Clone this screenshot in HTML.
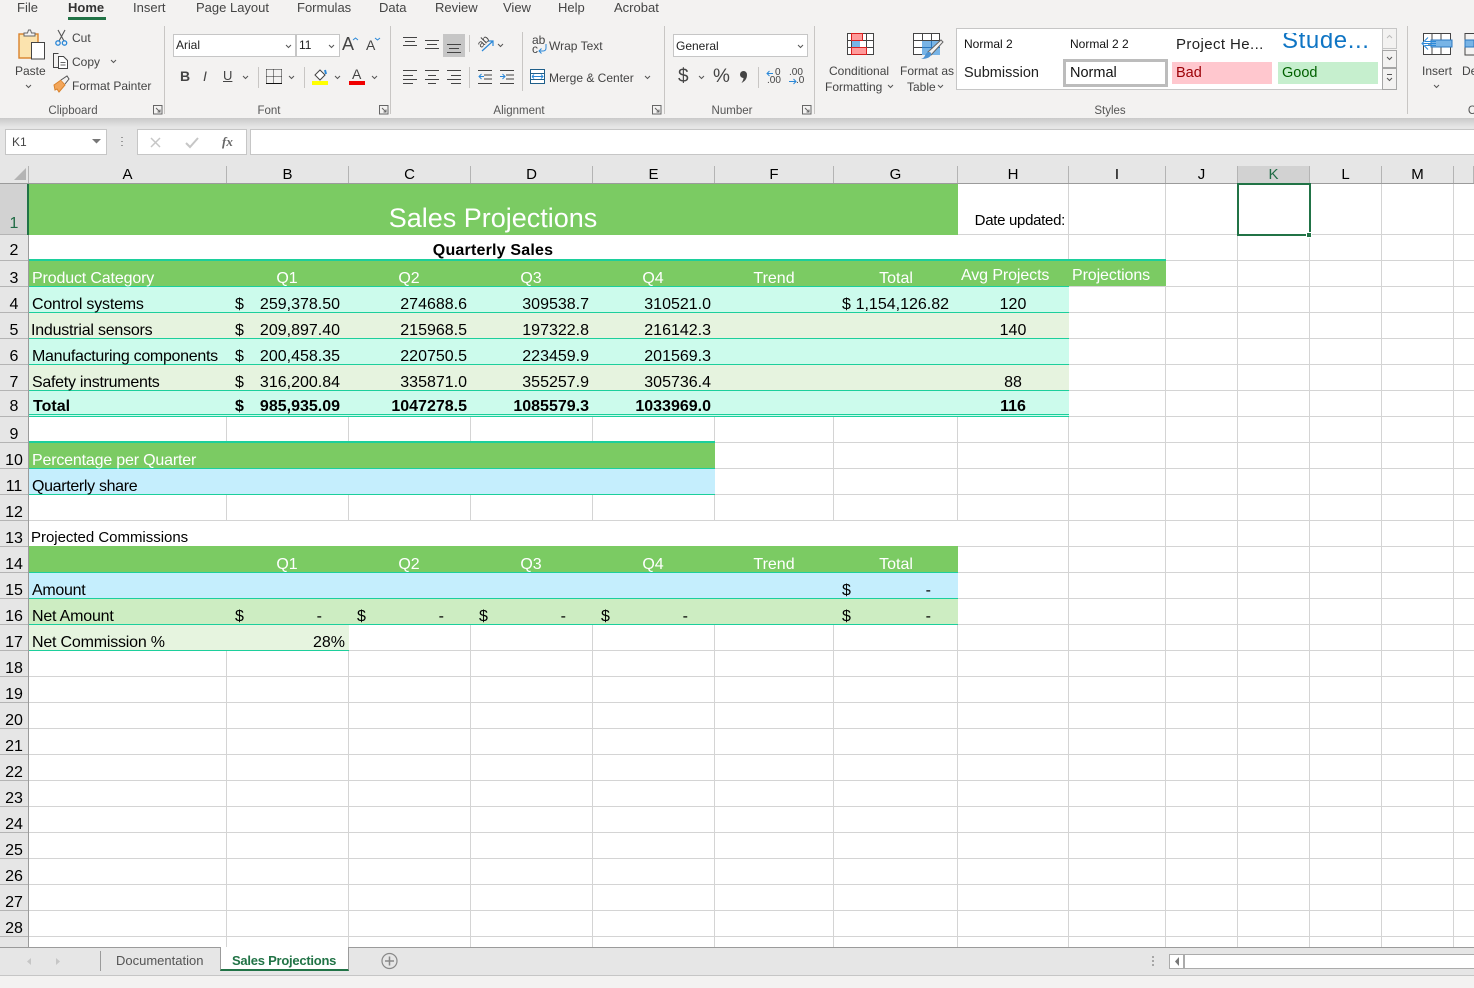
<!DOCTYPE html>
<html><head><meta charset="utf-8"><title>Sales Projections</title>
<style>
html,body{margin:0;padding:0;background:#fff}
#p{position:relative;width:1474px;height:988px;overflow:hidden;background:#fff;font-family:"Liberation Sans",sans-serif;color:#000}
#p div{position:absolute}
.t{white-space:nowrap;font-size:16px;line-height:20px;height:20px}
.r{white-space:nowrap;font-size:16px;line-height:20px;height:20px;text-align:right}
.c{white-space:nowrap;font-size:16px;line-height:20px;height:20px;text-align:center;transform:translateX(-50%)}
.w{color:#fff}
.b{font-weight:bold}
.m{white-space:nowrap;font-size:13px;line-height:16px;color:#444;top:0}
.s{white-space:nowrap;font-size:12px;line-height:16px;color:#444}
.g{white-space:nowrap;font-size:11.5px;line-height:14px;color:#555;top:104px;transform:translateX(-50%)}
.v{width:1px;background:#d4d4d4;top:184px;height:763px}
.ch{top:166px;height:18px;font-size:15px;line-height:18px;text-align:center;border-right:1px solid #b4b4b4;box-sizing:border-box}
.rh{left:0;width:28px;text-align:center;font-size:16px;line-height:20px;height:20px}
.tl{height:1px;background:#1ccf9c}
</style></head><body><div id="p">

<!-- ribbon -->
<div style="left:0;top:0;width:1474px;height:118px;background:#f3f2f1"></div>
<div style="left:0;top:118px;width:1474px;height:48px;background:#e6e6e6"></div>
<div style="left:0;top:118px;width:1474px;height:9px;background:linear-gradient(#c9c9c9,#e6e6e6)"></div>

<div class="m" style="left:17px">File</div>
<div class="m" style="left:68px;font-weight:bold;color:#333">Home</div>
<div style="left:68px;top:17px;width:38px;height:3px;background:#217346"></div>
<div class="m" style="left:133px">Insert</div>
<div class="m" style="left:196px">Page Layout</div>
<div class="m" style="left:297px">Formulas</div>
<div class="m" style="left:379px">Data</div>
<div class="m" style="left:435px">Review</div>
<div class="m" style="left:503px">View</div>
<div class="m" style="left:558px">Help</div>
<div class="m" style="left:614px">Acrobat</div>

<!-- group separators -->
<div style="left:164px;top:26px;width:1px;height:88px;background:#c8c6c4"></div>
<div style="left:390px;top:26px;width:1px;height:88px;background:#c8c6c4"></div>
<div style="left:664px;top:26px;width:1px;height:88px;background:#c8c6c4"></div>
<div style="left:814px;top:26px;width:1px;height:88px;background:#c8c6c4"></div>
<div style="left:1407px;top:26px;width:1px;height:88px;background:#c8c6c4"></div>

<!-- combos -->
<div style="left:173px;top:34px;width:121px;height:21px;background:#fff;border:1px solid #c6c6c6"></div>
<div style="left:296px;top:34px;width:42px;height:21px;background:#fff;border:1px solid #c6c6c6"></div>
<div style="left:443px;top:34px;width:22px;height:23px;background:#c6c6c6"></div>
<div style="left:673px;top:34px;width:133px;height:21px;background:#fff;border:1px solid #c6c6c6"></div>

<!-- ribbon icons -->
<svg style="position:absolute;left:0;top:0" width="1474" height="166" viewBox="0 0 1474 166" fill="none">
<!-- paste -->
<rect x="19" y="34" width="19" height="24" fill="#fbe3ae" stroke="#d9822b" stroke-width="1.4"/>
<path d="M24 36v-3h3.500l1-3h2l1 3H35v3z" fill="#f3f2f1" stroke="#666"/>
<rect x="31.500" y="42.500" width="13" height="16.500" fill="#fff" stroke="#444"/>
<!-- cut -->
<path d="M58 30l6 11M65 30l-6 11" stroke="#555" stroke-width="1.100"/>
<circle cx="58" cy="43" r="2.200" stroke="#2b88d8" stroke-width="1.300"/><circle cx="64.500" cy="43" r="2.200" stroke="#2b88d8" stroke-width="1.300"/>
<!-- copy -->
<path d="M60 67.500h-6.500v-14h5" stroke="#444"/>
<path d="M58.500 56.500h5l4 4v8h-9z" fill="#fff" stroke="#444"/>
<path d="M60.500 62.500h5M60.500 65h5" stroke="#666"/>
<path d="M111 60l2.500 2.500 2.500-2.500" stroke="#555"/>
<!-- painter -->
<path d="M54 85l7-5 4 5-6 7-2-3-2 1z" fill="#f2a65a" stroke="#d9822b"/>
<path d="M61 80l6-4 2 3-4 5" fill="#f3f2f1" stroke="#555"/>
<!-- chevrons -->
<g stroke="#555" stroke-width="1" fill="none">
<path d="M26 85l2.500 2.500L31 85"/>
<path d="M286 45l2.500 2.500L291 45"/><path d="M329 45l2.500 2.500L334 45"/>
<path d="M243 76l2.500 2.500 2.500-2.500"/><path d="M289 76l2.500 2.500 2.500-2.500"/><path d="M335 76l2.500 2.500 2.500-2.500"/><path d="M372 76l2.500 2.500 2.500-2.500"/>
<path d="M498 44l2.500 2.500 2.500-2.500"/><path d="M645 76l2.500 2.500 2.500-2.500"/><path d="M699 76l2.500 2.500 2.500-2.500"/>
<path d="M798 45l2.500 2.500 2.500-2.500"/><path d="M888 85l2.500 2.500 2.500-2.500"/><path d="M938 85l2.500 2.500 2.500-2.500"/>
<path d="M1434 85l2.500 2.500 2.500-2.500"/>
<path d="M1387 57l2.500 2.500 2.500-2.500"/><path d="M1387 78l2.500 2.500 2.500-2.500"/><path d="M1387 74.500h5"/>
</g>
<path d="M1387 38l2.500-2.500 2.500 2.500" stroke="#bbb"/>
<!-- launchers -->
<g stroke="#666">
<path d="M153.500 105.500h8.500v8.500h-8.500zM156 108l4 4M160 109.500v2.500h-2.500"/>
<path d="M379.500 105.500h8.500v8.500h-8.500zM382 108l4 4M386 109.500v2.500h-2.500"/>
<path d="M652.500 105.500h8.500v8.500h-8.500zM655 108l4 4M659 109.500v2.500h-2.500"/>
<path d="M802.500 105.500h8.500v8.500h-8.500zM805 108l4 4M809 109.500v2.500h-2.500"/>
</g>
<!-- small separators -->
<path d="M258.500 67v21M304.500 67v21M469.500 35v17M469.500 67v21M522.500 32v59M758.500 67v21" stroke="#c8c6c4"/>
<!-- borders icon -->
<path d="M266.500 69.500h15M266.500 76.500h15M266.500 69.500v14M273.500 69.500v14M281.500 69.500v14" stroke="#222" stroke-dasharray="1 1"/>
<path d="M266 83.500h16" stroke="#111"/>
<!-- fill -->
<path d="M315 75l5-5 5 5-5 5z" fill="#fff" stroke="#444"/><path d="M325 70l1 4" stroke="#2b88d8" stroke-width="2"/>
<rect x="312" y="81" width="16" height="4" fill="#ffff00"/>
<rect x="349" y="81" width="16" height="4" fill="#f00000"/>
<!-- up/down arrows on A -->
<path d="M353 40l2.500-2 2.500 2" stroke="#2b88d8"/><path d="M375 38l2.500 2 2.500-2" stroke="#2b88d8"/>
<!-- align -->
<g stroke="#444">
<path d="M403 37.500h14M405 41.500h10M403 45.500h14"/>
<path d="M425 40.500h14M427 44.500h10M425 48.500h14"/>
<path d="M447 44.500h14M449 48.500h10M447 52.500h14"/>
<path d="M403 70.500h14M403 75.500h10M403 79.500h14M403 83.500h10"/>
<path d="M425 70.500h14M428 75.500h8M425 79.500h14M428 83.500h8"/>
<path d="M447 70.500h14M451 75.500h10M447 79.500h14M451 83.500h10"/>
<path d="M478 70.500h14M484 75h8M484 79h8M478 83.500h14"/>
<path d="M500 70.500h14M506 75h8M506 79h8M500 83.500h14"/>
</g>
<path d="M484 76.500h-5m2.500-2.500l-2.500 2.500 2.500 2.500" stroke="#2b88d8"/>
<path d="M500 76.500h5m-2.500-2.500l2.500 2.500-2.500 2.500" stroke="#2b88d8"/>
<!-- orientation -->
<path d="M482 51l11-10m-5 0h5v5" stroke="#2b88d8" stroke-width="1.200"/>
<text x="477" y="46" font-size="11" fill="#444" transform="rotate(-45 482 42)" font-family="Liberation Sans">ab</text>
<!-- wrap -->
<text x="532" y="44" font-size="12" fill="#444" font-family="Liberation Sans">ab</text>
<text x="532" y="53" font-size="12" fill="#444" font-family="Liberation Sans">c</text>
<path d="M546 44v4q0 3-3 3h-4m2.500-2.500l-2.500 2.500 2.500 2.500" stroke="#2b88d8"/>
<!-- merge -->
<rect x="530.500" y="69.500" width="14" height="14" stroke="#1f5f8a" fill="#fff"/>
<path d="M530 73.500h15M530 79.500h15" stroke="#1f5f8a"/>
<path d="M532 76.500h11m-2-2l2 2-2 2m-9-2l2-2m-2 2l2 2" stroke="#2b88d8"/>
<!-- comma -->
<path d="M743.500 71a3.500 3.500 0 0 1 3.500 4c0 4-2.500 6.500-5.500 8 1.200-2 2-3.500 2-5a3.500 3.500 0 0 1 0-7z" fill="#444"/>
<!-- decimals -->
<path d="M773 73.500h-6m2.500-2.500l-2.500 2.500 2.500 2.500" stroke="#2b88d8"/>
<path d="M789 81.500h7m-2.500-2.500l2.500 2.500-2.500 2.500" stroke="#2b88d8"/>
<!-- conditional -->
<g stroke="#444"><rect x="847.500" y="33.500" width="26" height="21" fill="#fff"/><path d="M847 40.500h27M847 47.500h27M851.500 33v22M859.500 33v22M866.500 33v22"/></g>
<rect x="851.500" y="33.500" width="11" height="7" fill="#ff9a9a" stroke="#d92020"/>
<rect x="851.500" y="47.500" width="15" height="7" fill="#ff9a9a" stroke="#d92020"/>
<rect x="852" y="41" width="8" height="6" fill="#78b4e6"/>
<!-- format table -->
<g stroke="#444"><rect x="913.500" y="33.500" width="26" height="21" fill="#fff"/><path d="M913 40.500h27M913 47.500h27M922.500 33v22M931.500 33v22"/></g>
<rect x="922" y="41" width="18" height="14" fill="#78b4e6"/>
<path d="M922 47.500h18M931.500 41v14" stroke="#2b78c0"/>
<path d="M928 52l13-12 2 2-12 13z" fill="#f3f2f1" stroke="#666"/>
<path d="M921 59c3 0 7-.5 9-2.500 2-2 1.500-4-.5-4.500-2 0-3.500 1-4.500 3.500-.8 1.700-2 3-4 3.500z" fill="#4d93d2"/>
<!-- insert -->
<g stroke="#444"><rect x="1423.500" y="33.500" width="27" height="21" fill="#fff"/><path d="M1423 44h28M1432 33v22M1441 33v22"/></g>
<rect x="1431" y="40" width="21" height="7" fill="#78b4e6" stroke="#2b78c0"/>
<path d="M1436 43.500h-13m5-6l-6 6 6 6m-3-8h11m-11 4h11" stroke="#2b88d8" fill="#fff"/>
<g stroke="#444"><path d="M1474 33.500h-9v7M1465 47v8h9"/></g>
<rect x="1465" y="40" width="9" height="7" fill="#78b4e6" stroke="#2b78c0"/>
</svg>

<div class="s" style="left:72px;top:30px">Cut</div>
<div class="s" style="left:72px;top:54px">Copy</div>
<div class="s" style="left:72px;top:78px">Format Painter</div>
<div class="s" style="left:15px;top:63px">Paste</div>
<div class="s" style="left:176px;top:37px;color:#222">Arial</div>
<div class="s" style="left:299px;top:37px;color:#222">11</div>
<div class="s" style="left:342px;top:34px;font-size:18px;line-height:20px">A</div>
<div class="s" style="left:366px;top:37px;font-size:14px">A</div>
<div class="s" style="left:180px;top:68px;font-weight:bold;font-size:14px">B</div>
<div class="s" style="left:203px;top:68px;font-style:italic;font-size:14px">I</div>
<div class="s" style="left:223px;top:68px;text-decoration:underline;font-size:13px">U</div>
<div class="s" style="left:352px;top:66px;font-size:14px">A</div>
<div class="s" style="left:549px;top:38px">Wrap Text</div>
<div class="s" style="left:549px;top:70px">Merge &amp; Center</div>
<div class="s" style="left:676px;top:38px;color:#222">General</div>
<div class="s" style="left:678px;top:67px;font-size:19px;line-height:20px">$</div>
<div class="s" style="left:713px;top:67px;font-size:19px;line-height:20px">%</div>
<div class="s" style="left:775px;top:68px;font-size:10px;line-height:10px">0</div>
<div class="s" style="left:767px;top:76px;font-size:10px;line-height:10px">.00</div>
<div class="s" style="left:789px;top:68px;font-size:10px;line-height:10px">.00</div>
<div class="s" style="left:796px;top:76px;font-size:10px;line-height:10px">.0</div>
<div class="s" style="left:829px;top:63px">Conditional</div>
<div class="s" style="left:825px;top:79px">Formatting</div>
<div class="s" style="left:900px;top:63px">Format as</div>
<div class="s" style="left:907px;top:79px">Table</div>
<div class="s" style="left:1422px;top:63px">Insert</div>
<div class="s" style="left:1462px;top:63px">De</div>

<div class="g" style="left:73px">Clipboard</div>
<div class="g" style="left:269px">Font</div>
<div class="g" style="left:519px">Alignment</div>
<div class="g" style="left:732px">Number</div>
<div class="g" style="left:1110px">Styles</div>
<div class="g" style="left:1472px">C</div>

<!-- styles gallery -->
<div style="left:956px;top:28px;width:425px;height:60px;background:#fff;border:1px solid #c6c6c6"></div>
<div style="left:1382px;top:28px;width:13px;height:19px;border:1px solid #c6c6c6"></div>
<div style="left:1382px;top:50px;width:13px;height:16px;border:1px solid #a6a6a6"></div>
<div style="left:1382px;top:68px;width:13px;height:20px;border:1px solid #a6a6a6"></div>
<div class="s" style="left:964px;top:36px;color:#111">Normal 2</div>
<div class="s" style="left:1070px;top:36px;color:#111">Normal 2 2</div>
<div class="s" style="left:1176px;top:36px;font-size:15px;line-height:18px;color:#222;letter-spacing:.4px">Project He...</div>
<div style="left:1282px;top:33px;width:90px;height:22px;overflow:hidden"><div class="s" style="left:0;top:-6px;font-size:24px;line-height:28px;color:#0f75c4;letter-spacing:.6px">Stude...</div></div>
<div class="s" style="left:964px;top:65px;font-size:14.500px;color:#222">Submission</div>
<div style="left:1063px;top:59px;width:99px;height:22px;background:#fff;border:3px solid #bcbcbc"></div>
<div class="s" style="left:1070px;top:65px;font-size:14.500px;color:#111">Normal</div>
<div style="left:1172px;top:62px;width:100px;height:22px;background:#ffc7ce"></div>
<div class="s" style="left:1176px;top:65px;font-size:14.500px;color:#9c0006">Bad</div>
<div style="left:1278px;top:62px;width:100px;height:22px;background:#c6efce"></div>
<div class="s" style="left:1282px;top:65px;font-size:14.500px;color:#006100">Good</div>

<!-- formula bar -->
<div style="left:5px;top:129px;width:100px;height:24px;background:#fff;border:1px solid #c6c6c6"></div>
<div class="s" style="left:12px;top:134px;color:#444">K1</div>
<svg style="position:absolute;left:0;top:120px" width="260" height="45" fill="none">
<path d="M92 19h9l-4.500 4.500z" fill="#777"/>
<path d="M122 17v1M122 21v1M122 25v1" stroke="#999" stroke-width="2"/>
</svg>
<div style="left:137px;top:129px;width:108px;height:24px;background:#fff;border:1px solid #c6c6c6"></div>
<svg style="position:absolute;left:137px;top:129px" width="110" height="26" fill="none">
<path d="M14 9l9 9M23 9l-9 9" stroke="#c6c6c6" stroke-width="1.500"/>
<path d="M49 14l4 4 8-9" stroke="#c6c6c6" stroke-width="2"/>
</svg>
<div class="s" style="left:222px;top:134px;font-family:'Liberation Serif',serif;font-style:italic;font-weight:bold;color:#666;font-size:13px">fx</div>
<div style="left:250px;top:129px;width:1224px;height:24px;background:#fff;border:1px solid #c6c6c6;border-right:0"></div>

<!-- column headers -->
<div style="left:0;top:166px;width:1474px;height:18px;background:#e6e6e6"></div>
<svg style="position:absolute;left:0;top:166px" width="30" height="18"><path d="M14 14L26 2V14z" fill="#b4b4b4"/></svg>
<div style="left:28px;top:166px;width:1px;height:18px;background:#b4b4b4"></div>
<div class="ch" style="left:29px;width:198px">A</div>
<div class="ch" style="left:227px;width:122px">B</div>
<div class="ch" style="left:349px;width:122px">C</div>
<div class="ch" style="left:471px;width:122px">D</div>
<div class="ch" style="left:593px;width:122px">E</div>
<div class="ch" style="left:715px;width:119px">F</div>
<div class="ch" style="left:834px;width:124px">G</div>
<div class="ch" style="left:958px;width:111px">H</div>
<div class="ch" style="left:1069px;width:97px">I</div>
<div class="ch" style="left:1166px;width:72px">J</div>
<div class="ch" style="left:1238px;width:72px;background:#d2d2d2;color:#1f6b45">K</div>
<div class="ch" style="left:1310px;width:72px">L</div>
<div class="ch" style="left:1382px;width:72px">M</div>
<div class="ch" style="left:1454px;width:20px"></div>
<div style="left:0;top:183px;width:1474px;height:1px;background:#9b9b9b"></div>

<!-- row headers -->
<div style="left:0;top:184px;width:28px;height:763px;background:#e6e6e6"></div>
<div style="left:0;top:184px;width:28px;height:51px;background:#d2d2d2"></div>
<div style="left:0;top:209px;width:28px;height:738px;background:repeating-linear-gradient(to bottom,transparent 0 25px,#b4b4b4 25px 26px)"></div>
<div style="left:28px;top:184px;width:1px;height:763px;background:#9b9b9b"></div>
<div style="left:27px;top:184px;width:2px;height:51px;background:#217346"></div>

<!-- grid -->
<div style="left:29px;top:209px;width:1445px;height:738px;background:repeating-linear-gradient(to bottom,transparent 0 25px,#d4d4d4 25px 26px)"></div>
<div class="v" style="left:226px"></div><div class="v" style="left:348px"></div><div class="v" style="left:470px"></div><div class="v" style="left:592px"></div><div class="v" style="left:714px"></div><div class="v" style="left:833px"></div><div class="v" style="left:957px"></div><div class="v" style="left:1068px"></div><div class="v" style="left:1165px"></div><div class="v" style="left:1237px"></div><div class="v" style="left:1309px"></div><div class="v" style="left:1381px"></div><div class="v" style="left:1453px"></div>

<!-- fills -->
<div style="left:29px;top:184px;width:929px;height:51px;background:#7bcb63"></div>
<div style="left:29px;top:235px;width:929px;height:24px;background:#fff"></div>
<div class="tl" style="left:29px;top:259px;width:1137px;height:2px"></div>
<div style="left:29px;top:261px;width:1137px;height:25px;background:#7bcb63"></div>
<div class="tl" style="left:29px;top:286px;width:1040px"></div>
<div style="left:29px;top:287px;width:1040px;height:25px;background:#ccfbec"></div>
<div class="tl" style="left:29px;top:312px;width:1040px"></div>
<div style="left:29px;top:313px;width:1040px;height:25px;background:#e6f3df"></div>
<div class="tl" style="left:29px;top:338px;width:1040px"></div>
<div style="left:29px;top:339px;width:1040px;height:25px;background:#ccfbec"></div>
<div class="tl" style="left:29px;top:364px;width:1040px"></div>
<div style="left:29px;top:365px;width:1040px;height:25px;background:#e6f3df"></div>
<div class="tl" style="left:29px;top:390px;width:1040px"></div>
<div style="left:29px;top:391px;width:1040px;height:23px;background:#ccfbec"></div>
<div class="tl" style="left:29px;top:414px;width:1040px"></div>
<div style="left:29px;top:415px;width:1040px;height:1px;background:#ccfbec"></div>
<div class="tl" style="left:29px;top:416px;width:1040px"></div>

<div class="tl" style="left:29px;top:441px;width:686px;height:2px"></div>
<div style="left:29px;top:443px;width:686px;height:25px;background:#7bcb63"></div>
<div class="tl" style="left:29px;top:468px;width:686px"></div>
<div style="left:29px;top:469px;width:686px;height:25px;background:#c5eefd"></div>
<div class="tl" style="left:29px;top:494px;width:686px"></div>

<div style="left:29px;top:521px;width:929px;height:25px;background:#fff"></div>
<div style="left:29px;top:546px;width:929px;height:26px;background:#7bcb63"></div>
<div class="tl" style="left:29px;top:572px;width:929px"></div>
<div style="left:29px;top:573px;width:929px;height:25px;background:#c5eefd"></div>
<div class="tl" style="left:29px;top:598px;width:929px"></div>
<div style="left:29px;top:599px;width:929px;height:25px;background:#cdedc2"></div>
<div class="tl" style="left:29px;top:624px;width:929px"></div>
<div style="left:29px;top:625px;width:320px;height:25px;background:#e6f4df"></div>
<div class="tl" style="left:29px;top:650px;width:320px"></div>

<!-- selection -->
<div style="left:1237px;top:183px;width:70px;height:49px;border:2px solid #217346"></div>
<div style="left:1306px;top:232px;width:6px;height:6px;background:#217346;border:1px solid #fff;box-sizing:border-box"></div>

<!-- row numbers -->
<div class="rh" style="top:214px;color:#1f6b45">1</div><div class="rh" style="top:241px">2</div><div class="rh" style="top:269px">3</div><div class="rh" style="top:295px">4</div><div class="rh" style="top:321px">5</div><div class="rh" style="top:347px">6</div><div class="rh" style="top:373px">7</div><div class="rh" style="top:397px">8</div><div class="rh" style="top:425px">9</div><div class="rh" style="top:451px">10</div><div class="rh" style="top:477px">11</div><div class="rh" style="top:503px">12</div><div class="rh" style="top:529px">13</div><div class="rh" style="top:555px">14</div><div class="rh" style="top:581px">15</div><div class="rh" style="top:607px">16</div><div class="rh" style="top:633px">17</div><div class="rh" style="top:659px">18</div><div class="rh" style="top:685px">19</div><div class="rh" style="top:711px">20</div><div class="rh" style="top:737px">21</div><div class="rh" style="top:763px">22</div><div class="rh" style="top:789px">23</div><div class="rh" style="top:815px">24</div><div class="rh" style="top:841px">25</div><div class="rh" style="top:867px">26</div><div class="rh" style="top:893px">27</div><div class="rh" style="top:919px">28</div>

<!-- cells -->
<div class="c w" style="left:493px;top:203px;font-size:27px;line-height:30px;height:30px">Sales Projections</div>
<div class="r" style="right:409px;top:211px;font-size:15px;letter-spacing:-.3px">Date updated:</div>
<div class="c b" style="left:493px;top:241px;letter-spacing:.2px">Quarterly Sales</div>

<div class="t w" style="left:32px;top:269px;letter-spacing:-.15px">Product Category</div>
<div class="c w" style="left:287px;top:269px">Q1</div><div class="c w" style="left:409px;top:269px">Q2</div><div class="c w" style="left:531px;top:269px">Q3</div><div class="c w" style="left:653px;top:269px">Q4</div><div class="c w" style="left:774px;top:269px">Trend</div><div class="c w" style="left:896px;top:269px">Total</div>
<div class="t w" style="left:961px;top:266px;letter-spacing:-.1px">Avg Projects</div><div class="t w" style="left:1072px;top:266px;letter-spacing:-.1px">Projections</div>

<div class="t" style="left:32px;top:295px;letter-spacing:-.2px">Control systems</div><div class="t" style="left:235px;top:295px">$</div><div class="r" style="right:1134px;top:295px">259,378.50</div><div class="r" style="right:1007px;top:295px">274688.6</div><div class="r" style="right:885px;top:295px">309538.7</div><div class="r" style="right:763px;top:295px">310521.0</div><div class="t" style="left:842px;top:295px">$</div><div class="r" style="right:525px;top:295px">1,154,126.82</div><div class="c" style="left:1013px;top:295px">120</div>

<div class="t" style="left:31px;top:321px;letter-spacing:-.22px">Industrial sensors</div><div class="t" style="left:235px;top:321px">$</div><div class="r" style="right:1134px;top:321px">209,897.40</div><div class="r" style="right:1007px;top:321px">215968.5</div><div class="r" style="right:885px;top:321px">197322.8</div><div class="r" style="right:763px;top:321px">216142.3</div><div class="c" style="left:1013px;top:321px">140</div>

<div class="t" style="left:32px;top:347px;letter-spacing:-.3px">Manufacturing components</div><div class="t" style="left:235px;top:347px">$</div><div class="r" style="right:1134px;top:347px">200,458.35</div><div class="r" style="right:1007px;top:347px">220750.5</div><div class="r" style="right:885px;top:347px">223459.9</div><div class="r" style="right:763px;top:347px">201569.3</div>

<div class="t" style="left:32px;top:373px;letter-spacing:-.28px">Safety instruments</div><div class="t" style="left:235px;top:373px">$</div><div class="r" style="right:1134px;top:373px">316,200.84</div><div class="r" style="right:1007px;top:373px">335871.0</div><div class="r" style="right:885px;top:373px">355257.9</div><div class="r" style="right:763px;top:373px">305736.4</div><div class="c" style="left:1013px;top:373px">88</div>

<div class="t b" style="left:33px;top:397px">Total</div><div class="t b" style="left:235px;top:397px">$</div><div class="r b" style="right:1134px;top:397px">985,935.09</div><div class="r b" style="right:1007px;top:397px">1047278.5</div><div class="r b" style="right:885px;top:397px">1085579.3</div><div class="r b" style="right:763px;top:397px">1033969.0</div><div class="c b" style="left:1013px;top:397px">116</div>

<div class="t w" style="left:32px;top:451px;letter-spacing:-.18px">Percentage per Quarter</div>
<div class="t" style="left:32px;top:477px;letter-spacing:-.33px">Quarterly share</div>
<div class="t" style="left:31px;top:528px;font-size:15px;letter-spacing:-.02px">Projected Commissions</div>

<div class="c w" style="left:287px;top:555px">Q1</div><div class="c w" style="left:409px;top:555px">Q2</div><div class="c w" style="left:531px;top:555px">Q3</div><div class="c w" style="left:653px;top:555px">Q4</div><div class="c w" style="left:774px;top:555px">Trend</div><div class="c w" style="left:896px;top:555px">Total</div>

<div class="t" style="left:32px;top:581px;letter-spacing:-.3px">Amount</div><div class="t" style="left:842px;top:581px">$</div><div class="r" style="right:543px;top:581px">-</div>
<div class="t" style="left:32px;top:607px;letter-spacing:-.2px">Net Amount</div>
<div class="t" style="left:235px;top:607px">$</div><div class="r" style="right:1152px;top:607px">-</div>
<div class="t" style="left:357px;top:607px">$</div><div class="r" style="right:1030px;top:607px">-</div>
<div class="t" style="left:479px;top:607px">$</div><div class="r" style="right:908px;top:607px">-</div>
<div class="t" style="left:601px;top:607px">$</div><div class="r" style="right:786px;top:607px">-</div>
<div class="t" style="left:842px;top:607px">$</div><div class="r" style="right:543px;top:607px">-</div>
<div class="t" style="left:32px;top:633px;letter-spacing:-.2px">Net Commission %</div><div class="r" style="right:1129px;top:633px">28%</div>

<!-- sheet tabs -->
<div style="left:0;top:947px;width:1474px;height:28px;background:#e6e6e6;border-top:1px solid #9b9b9b;box-sizing:border-box"></div>
<div style="left:0;top:975px;width:1474px;height:13px;background:#f3f2f1;border-top:1px solid #c6c6c6;box-sizing:border-box"></div>
<div style="left:100px;top:951px;width:1px;height:20px;background:#9b9b9b"></div>
<div class="s" style="left:116px;top:953px;font-size:13px;color:#555">Documentation</div>
<div style="left:220px;top:947px;width:127px;height:22px;background:#fff;border:1px solid #9b9b9b;border-top:0;border-bottom:2px solid #217346"></div>
<div class="s" style="left:232px;top:953px;font-size:13px;font-weight:bold;color:#217346;letter-spacing:-.25px">Sales Projections</div>
<svg style="position:absolute;left:0;top:947px" width="420" height="28" fill="none">
<path d="M31 11l-4 3.500 4 3.500z" fill="#c6c6c6"/><path d="M56 11l4 3.500-4 3.500z" fill="#c6c6c6"/>
<circle cx="389.500" cy="14" r="7.500" stroke="#888" stroke-width="1.200"/><path d="M385 14h9M389.500 9.500v9" stroke="#888" stroke-width="1.500"/>
</svg>
<div style="left:1152px;top:956px;width:2px;height:2px;background:#a6a6a6"></div>
<div style="left:1152px;top:960px;width:2px;height:2px;background:#a6a6a6"></div>
<div style="left:1152px;top:964px;width:2px;height:2px;background:#a6a6a6"></div>
<div style="left:1169px;top:954px;width:310px;height:13px;background:#fff;border:1px solid #ababab"></div>
<div style="left:1183px;top:954px;width:2px;height:15px;background:#ababab"></div>
<svg style="position:absolute;left:1170px;top:955px" width="14" height="14"><path d="M9 2L5 6.500 9 11z" fill="#777"/></svg>

</div></body></html>
